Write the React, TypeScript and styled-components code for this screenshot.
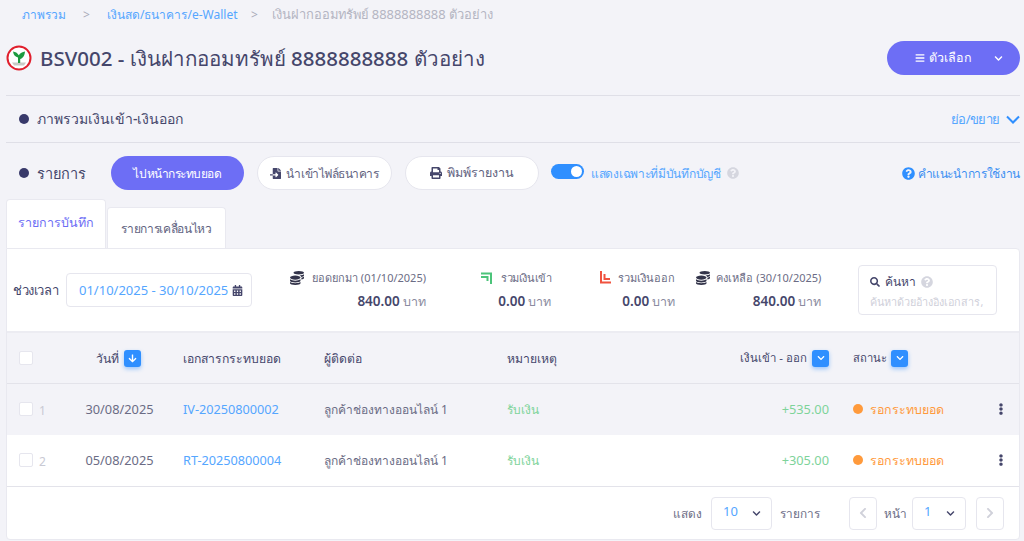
import React from "react";
import styled, { createGlobalStyle } from "styled-components";
import { FaBars, FaChevronDown, FaChevronLeft, FaChevronRight, FaFileImport, FaPrint, FaQuestionCircle, FaCoins, FaCalendarAlt, FaSearch, FaArrowDown, FaEllipsisV } from "react-icons/fa";

const Global = createGlobalStyle`
  html, body { margin: 0; padding: 0; background: #f3f3f8; }
  body { font-family: "Noto Sans", "Noto Sans CJK SC", "DejaVu Sans", sans-serif; color: #45466b; width: 1024px; height: 541px; overflow: hidden; }
  * { box-sizing: border-box; }
`;
const Page = styled.div`display: flex; flex-direction: column; padding: 0 4px 0 6px; height: 541px;`;
const Crumbs = styled.nav`display: flex; align-items: center; height: 29px; padding-left: 16px; font-size: 12px; color: #b4b5c2;`;
const CrumbLink = styled.span`color: #55a6ff;`;
const CrumbSep = styled.span<{ $w: number }>`width: ${p => p.$w}px; text-align: center; color: #a9aab8;`;
const CrumbCurrent = styled.span`font-size: 12.9px;`;
const TitleRow = styled.header`display: flex; align-items: center; justify-content: space-between; height: 67px; border-bottom: 1px solid #dfdfe7; padding-bottom: 8px;`;
const TitleLeft = styled.div`display: flex; align-items: center; gap: 8px;`;
const Title = styled.h1`margin: 0; font-size: 20.5px; font-weight: 500; color: #45466b; line-height: 26px;`;
const MenuButton = styled.button`width: 133px; height: 34px; border: 0; border-radius: 17px; background: #6d6ef5; color: #fff; font: inherit; font-size: 12.5px; display: flex; align-items: center; padding: 0 17px 0 28px; justify-content: space-between;`;
const MenuLabel = styled.span`display: flex; align-items: center; gap: 4px;`;
const SectionRow = styled.section`display: flex; align-items: center; justify-content: space-between; height: 47px; border-bottom: 1px solid #dfdfe7;`;
const SectionTitle = styled.div`display: flex; align-items: center; gap: 8px; padding-left: 13px; font-size: 14px; font-weight: 500; color: #45466b;`;
const Dot = styled.span`width: 10px; height: 10px; border-radius: 50%; background: #38396a;`;
const Collapse = styled.div`display: flex; align-items: center; gap: 6px; color: #55a6ff; font-size: 13px; letter-spacing: -0.5px;`;
const Toolbar = styled.div`display: flex; align-items: center; height: 34px; margin-top: 13px;`;
const ListTitle = styled(SectionTitle)`font-size: 14.5px; font-weight: 400; width: 105px;`;
const PrimaryPill = styled.button`width: 133px; height: 34px; margin-right: 13px; border: 0; border-radius: 17px; background: #6d6ef5; color: #fff; font: inherit; font-size: 12px; letter-spacing: -0.45px;`;
const OutlinePill = styled.button<{ $w: number; $fs: number; $ls?: number; $mr?: number }>`width: ${p => p.$w}px; height: 34px; margin-right: ${p => p.$mr ?? 13}px; border: 1px solid #e6e6ee; border-radius: 17px; background: #fff; color: #62637f; font: inherit; font-size: ${p => p.$fs}px; letter-spacing: ${p => p.$ls ?? 0}px; display: flex; align-items: center; justify-content: center; gap: 5px; svg { color: #45466b; }`;
const Switch = styled.span`width: 33px; height: 15px; border-radius: 8px; background: #2f8fff; display: inline-block; position: relative; margin-top: -4px; &::after { content: ""; position: absolute; right: 2px; top: 2px; width: 11px; height: 11px; border-radius: 50%; background: #fff; }`;
const SwitchLabel = styled.span`margin-left: 7px; color: #55a6ff; font-size: 12px; letter-spacing: -0.3px; display: flex; align-items: center; gap: 6px; svg { color: #d5d6df; }`;
const Guide = styled.span`margin-left: auto; display: flex; align-items: center; gap: 3px; color: #3b8ff2; font-size: 12px; letter-spacing: -0.35px; font-weight: 500; svg { color: #2f8fff; }`;
const Tabs = styled.div`display: flex; align-items: flex-end; margin-top: 9px; height: 49px;`;
const Tab = styled.div<{ $active?: boolean }>`
  height: ${p => (p.$active ? 49 : 41)}px; width: ${p => (p.$active ? 100 : 119)}px; margin-right: ${p => (p.$active ? 1 : 0)}px;
  background: #fff; border: 1px solid #e9e9f0; border-bottom: 0; border-radius: 4px 4px 0 0;
  display: flex; align-items: center; justify-content: center; font-size: ${p => (p.$active ? 12.5 : 12)}px; letter-spacing: ${p => (p.$active ? 0 : -0.35)}px; padding-bottom: ${p => (p.$active ? 2 : 0)}px;
  color: ${p => (p.$active ? "#6d6ef5" : "#62637f")}; font-weight: ${p => (p.$active ? 500 : 400)};
`;
const Card = styled.div`height: 292px; background: #fff; border: 1px solid #e9e9f0; border-radius: 0 4px 4px 4px; display: flex; flex-direction: column; width: 1014px;`;
const Filters = styled.div`display: flex; align-items: center; height: 84px; padding-left: 6px; border-bottom: 2px solid #ececf2;`;
const FilterLabel = styled.span`font-size: 13px; letter-spacing: -0.4px; color: #45466b; width: 53px;`;
const DateInput = styled.div`width: 186px; height: 34px; border: 1px solid #e6e6ee; border-radius: 4px; display: flex; align-items: center; padding-left: 12px; gap: 4px; font-size: 13px; color: #55a6ff; white-space: nowrap; svg { color: #45466b; }`;
const Stat = styled.div<{ $ml: number }>`margin-left: ${p => p.$ml}px; display: flex; flex-direction: column; align-items: flex-end; gap: 5px;`;
const StatTitle = styled.div<{ $gap: number; $ls?: number }>`display: flex; align-items: center; gap: ${p => p.$gap}px; font-size: 11px; letter-spacing: ${p => p.$ls ?? 0}px; color: #6b6c85; white-space: nowrap;`;
const StatValue = styled.div`font-size: 12.5px; color: #8a8ba0; b { font-weight: 600; color: #45466b; font-size: 13.5px; }`;
const SearchBox = styled.div`margin-left: 37px; width: 139px; height: 50px; border: 1px solid #e6e6ee; border-radius: 4px; padding: 6px 0 0 11px; overflow: hidden;`;
const SearchTitle = styled.div`display: flex; align-items: center; gap: 5px; font-size: 12px; font-weight: 500; color: #45466b; svg:last-child { color: #d5d6df; }`;
const SearchHint = styled.div`font-size: 10.8px; color: #cfd0da; margin-top: 3px; white-space: nowrap;`;
const grid = `display: grid; grid-template-columns: 60px 104px 141px 183px 173px 149px 161px 1fr; align-items: center; padding-left: 12px;`;
const HeadRow = styled.div`${grid} height: 51px; background: #f3f3f8; border-bottom: 1px solid #e3e3ea; font-size: 12.2px; color: #45466b;`;
const Row = styled.div<{ $shade?: boolean }>`${grid} height: 51px; padding-bottom: 1px; background: ${p => (p.$shade ? "#f3f3f8" : "#fff")}; font-size: 12px; color: #6b6c85;`;
const LastRule = styled.div`border-top: 1px solid #e3e3ea;`;
const CheckCell = styled.div`display: flex; align-items: center; gap: 6px; color: #c9cad4; font-size: 12px;`;
const Check = styled.span`width: 14px; height: 14px; border: 1px solid #e6e6ee; border-radius: 2px; background: #fff; display: inline-block;`;
const RowNumber = styled.span`padding-top: 3px;`;
const DateCell = styled.div`display: flex; align-items: center; justify-content: center; gap: 5px; padding-right: 25px;`;
const DateValue = styled(DateCell)`font-size: 12.8px; padding-right: 23px;`;
const Sort = styled.span`width: 17px; height: 17px; border-radius: 3px; background: #2f8fff; color: #fff; display: inline-flex; align-items: center; justify-content: center; box-shadow: 0 2px 4px rgba(47,143,255,.45);`;
const Link = styled.span`color: #55a6ff; font-size: 12.7px;`;
const Note = styled.span`color: #7ed39a;`;
const Amount = styled.div`text-align: right; color: #7ed39a; font-size: 12.8px;`;
const AmountHead = styled.div`display: flex; justify-content: flex-end; align-items: center; gap: 5px; font-size: 11.4px;`;
const StatusCell = styled.div`padding-left: 24px; display: flex; align-items: center; gap: 7px;`;
const StatusHead = styled(StatusCell)`gap: 4px; font-size: 11.2px;`;
const StatusDot = styled.span`width: 10px; height: 10px; border-radius: 50%; background: #ff9a3c;`;
const StatusText = styled.span`color: #ff9a3c; font-weight: 500; font-size: 12.4px;`;
const Kebab = styled.div`color: #45466b; display: flex; padding-left: 5px;`;
const Pager = styled.footer`flex: 1; display: flex; align-items: center; justify-content: flex-end; padding-right: 15px; font-size: 11.8px; color: #6b6c85;`;
const SelectBox = styled.div<{ $w: number; $ml: number; $mr: number }>`width: ${p => p.$w}px; height: 33px; margin: 0 ${p => p.$mr}px 0 ${p => p.$ml}px; border: 1px solid #e6e6ee; border-radius: 4px; display: flex; align-items: center; justify-content: space-between; padding: 0 10px 5px 11px; color: #55a6ff; font-size: 13px; svg { color: #45466b; margin-top: 6px; }`;
const PageButton = styled.div`width: 28px; height: 33px; border: 1px solid #e6e6ee; border-radius: 4px; display: flex; align-items: center; justify-content: center; color: #d0d1da;`;
const PagerText = styled.span<{ $mr?: number; $ml?: number }>`margin-right: ${p => p.$mr ?? 0}px; margin-left: ${p => p.$ml ?? 0}px;`;

const Logo = () => (
  <svg width="26" height="26" viewBox="0 0 26 26">
    <circle cx="13" cy="13" r="11.5" fill="#fff" stroke="#e01f2d" strokeWidth="2" />
    <path d="M6 17.500h14l-2 3H8z" fill="#c9c9c4" />
    <path d="M12 18v-5.500C9.500 12 7.500 10.200 7 6.500c2.500.3 4.300 1.400 5.800 3.700C14.200 8 16.300 6.800 19 6.500c-.3 4.500-2.500 6.800-4.800 7.500v4z" fill="#1d9a3f" />
  </svg>
);
const ArrowIn = () => (
  <svg width="13" height="13" viewBox="0 0 13 13" fill="none" stroke="#4cc47a" strokeWidth="2">
    <path d="M1 2.500h10V13M1 6h6.500v4" />
  </svg>
);
const ArrowOut = () => (
  <svg width="13" height="13" viewBox="0 0 13 13" fill="none" stroke="#f0533f" strokeWidth="2">
    <path d="M2 0v11.500h10M5.500 3v5h5.500" />
  </svg>
);
const ThinChevron = () => (
  <svg width="14" height="9" viewBox="0 0 14 9" fill="none" stroke="#2f8fff" strokeWidth="2">
    <path d="M1 1.500l6 6 6-6" />
  </svg>
);
const Coins = () => <FaCoins size={14} color="#33344a" />;

const rows = [
  { n: 1, date: "30/08/2025", doc: "IV-20250800002", amt: "+535.00", shade: true },
  { n: 2, date: "05/08/2025", doc: "RT-20250800004", amt: "+305.00", shade: false },
];

export default function App() {
  return (
    <>
      <Global />
      <Page>
        <Crumbs>
          <CrumbLink>ภาพรวม</CrumbLink>
          <CrumbSep $w={41}>&gt;</CrumbSep>
          <CrumbLink>เงินสด/ธนาคาร/e-Wallet</CrumbLink>
          <CrumbSep $w={34}>&gt;</CrumbSep>
          <CrumbCurrent>เงินฝากออมทรัพย์ 8888888888 ตัวอย่าง</CrumbCurrent>
        </Crumbs>
        <TitleRow>
          <TitleLeft>
            <Logo />
            <Title>BSV002 - เงินฝากออมทรัพย์ 8888888888 ตัวอย่าง</Title>
          </TitleLeft>
          <MenuButton>
            <MenuLabel><FaBars size={10} />ตัวเลือก</MenuLabel>
            <FaChevronDown size={9} />
          </MenuButton>
        </TitleRow>
        <SectionRow>
          <SectionTitle><Dot />ภาพรวมเงินเข้า-เงินออก</SectionTitle>
          <Collapse>ย่อ/ขยาย<ThinChevron /></Collapse>
        </SectionRow>
        <Toolbar>
          <ListTitle><Dot />รายการ</ListTitle>
          <PrimaryPill>ไปหน้ากระทบยอด</PrimaryPill>
          <OutlinePill $w={135} $fs={12} $ls={-0.45}><FaFileImport size={11} />นำเข้าไฟล์ธนาคาร</OutlinePill>
          <OutlinePill $w={134} $fs={12.5} $mr={12}><FaPrint size={12} />พิมพ์รายงาน</OutlinePill>
          <Switch />
          <SwitchLabel>แสดงเฉพาะที่มีบันทึกบัญชี<FaQuestionCircle size={12} /></SwitchLabel>
          <Guide><FaQuestionCircle size={13} />คำแนะนำการใช้งาน</Guide>
        </Toolbar>
        <Tabs>
          <Tab $active>รายการบันทึก</Tab>
          <Tab>รายการเคลื่อนไหว</Tab>
        </Tabs>
        <Card>
          <Filters>
            <FilterLabel>ช่วงเวลา</FilterLabel>
            <DateInput>01/10/2025 - 30/10/2025<FaCalendarAlt size={11} /></DateInput>
            <Stat $ml={38}>
              <StatTitle $gap={8}><Coins />ยอดยกมา (01/10/2025)</StatTitle>
              <StatValue><b>840.00</b> บาท</StatValue>
            </Stat>
            <Stat $ml={54}>
              <StatTitle $gap={8} $ls={-0.4}><ArrowIn />รวมเงินเข้า</StatTitle>
              <StatValue><b>0.00</b> บาท</StatValue>
            </Stat>
            <Stat $ml={48}>
              <StatTitle $gap={6}><ArrowOut />รวมเงินออก</StatTitle>
              <StatValue><b>0.00</b> บาท</StatValue>
            </Stat>
            <Stat $ml={21}>
              <StatTitle $gap={6}><Coins />คงเหลือ (30/10/2025)</StatTitle>
              <StatValue><b>840.00</b> บาท</StatValue>
            </Stat>
            <SearchBox>
              <SearchTitle><FaSearch size={10} />ค้นหา<FaQuestionCircle size={12} /></SearchTitle>
              <SearchHint>ค้นหาด้วยอ้างอิงเอกสาร,</SearchHint>
            </SearchBox>
          </Filters>
          <HeadRow>
            <CheckCell><Check /></CheckCell>
            <DateCell>วันที่<Sort><FaArrowDown size={9} /></Sort></DateCell>
            <div>เอกสารกระทบยอด</div>
            <div>ผู้ติดต่อ</div>
            <div>หมายเหตุ</div>
            <AmountHead>เงินเข้า - ออก<Sort><FaChevronDown size={8} /></Sort></AmountHead>
            <StatusHead>สถานะ<Sort><FaChevronDown size={8} /></Sort></StatusHead>
            <div />
          </HeadRow>
          {rows.map(r => (
            <Row key={r.n} $shade={r.shade}>
              <CheckCell><Check /><RowNumber>{r.n}</RowNumber></CheckCell>
              <DateValue>{r.date}</DateValue>
              <Link>{r.doc}</Link>
              <div>ลูกค้าช่องทางออนไลน์ 1</div>
              <Note>รับเงิน</Note>
              <Amount>{r.amt}</Amount>
              <StatusCell><StatusDot /><StatusText>รอกระทบยอด</StatusText></StatusCell>
              <Kebab><FaEllipsisV size={12} /></Kebab>
            </Row>
          ))}
          <LastRule />
          <Pager>
            <PagerText>แสดง</PagerText>
            <SelectBox $w={61} $ml={9} $mr={8}>10<FaChevronDown size={9} /></SelectBox>
            <PagerText $mr={29}>รายการ</PagerText>
            <PageButton><FaChevronLeft size={12} /></PageButton>
            <PagerText $ml={7}>หน้า</PagerText>
            <SelectBox $w={54} $ml={5} $mr={10}>1<FaChevronDown size={9} /></SelectBox>
            <PageButton><FaChevronRight size={12} /></PageButton>
          </Pager>
        </Card>
      </Page>
    </>
  );
}
